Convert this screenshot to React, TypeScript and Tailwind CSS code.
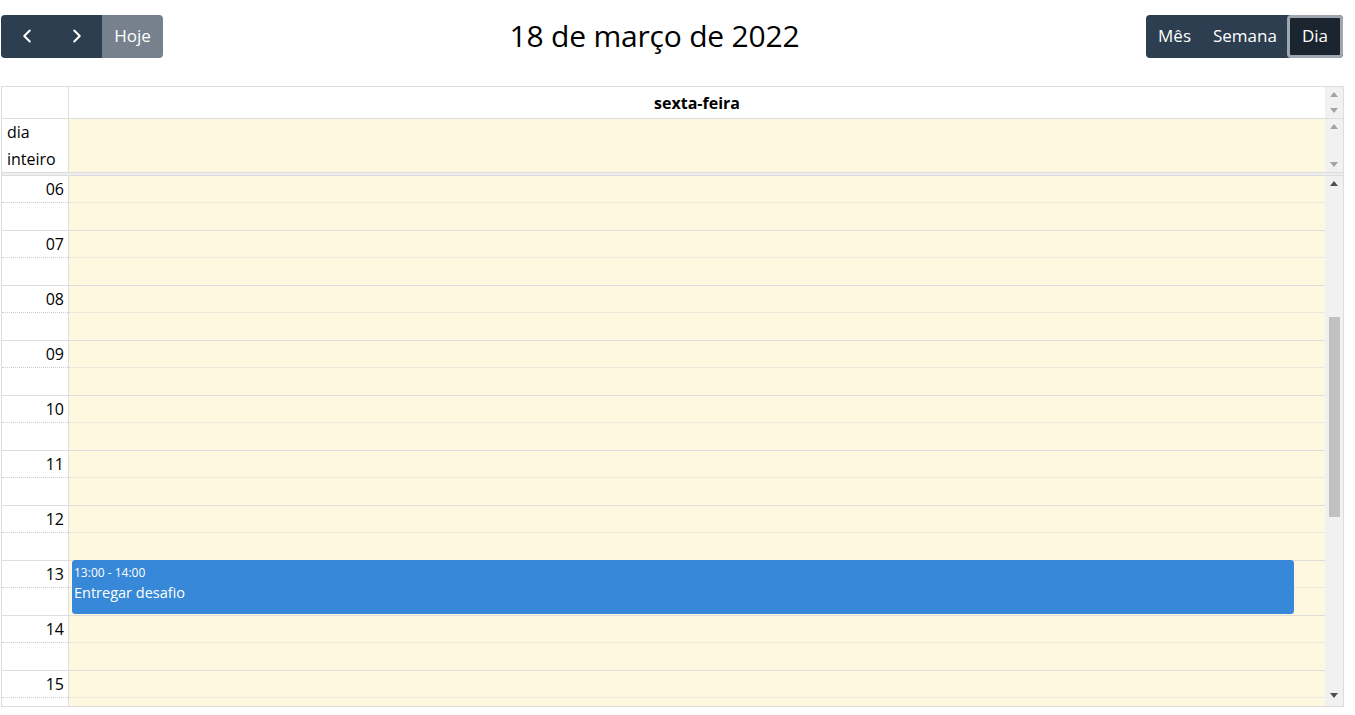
import { ChevronLeft, ChevronRight } from "lucide-react";

const hours = ["06", "07", "08", "09", "10", "11", "12", "13", "14", "15"];

const Tri = ({ up, color }: { up?: boolean; color: string }) => (
  <svg width="8" height="5" viewBox="0 0 8 5" className="block">
    <path d={up ? "M0 5 L4 0 L8 5 Z" : "M0 0 L8 0 L4 5 Z"} fill={color} />
  </svg>
);

export default function App() {
  return (
    <div className="w-[1355px] h-[715px] bg-white text-black overflow-hidden" style={{ fontFamily: '"Open Sans", "Noto Sans", sans-serif' }}>
      {/* toolbar */}
      <div className="flex items-center justify-between pl-[1px] pr-[12px] pt-[14px] h-[58px]">
        <div className="flex h-[43px] rounded-[4px] overflow-hidden text-white text-[17px]">
          <button className="w-[51px] flex items-center justify-center bg-[#2c3e50]">
            <ChevronLeft size={22} strokeWidth={2.2} />
          </button>
          <button className="w-[50px] flex items-center justify-center bg-[#2c3e50]">
            <ChevronRight size={22} strokeWidth={2.2} />
          </button>
          <button className="w-[61px] flex items-center justify-center bg-[#76818d]">Hoje</button>
        </div>
        <h2 className="text-[30px] leading-none tracking-[-0.2px]">18 de março de 2022</h2>
        <div className="flex h-[43px] rounded-[4px] overflow-hidden text-white text-[17px] bg-[#2c3e50]">
          <button className="px-[12px] flex items-center">Mês</button>
          <button className="px-[10px] flex items-center">Semana</button>
          <button className="px-[12px] flex items-center bg-[#1a252f] rounded-[4px] border-[3px] border-[#a0a7ae]">Dia</button>
        </div>
      </div>

      {/* calendar */}
      <div className="mt-[28px] ml-[1px] w-[1343px] border border-[#ddd] flex flex-col">
        {/* header */}
        <div className="flex h-[32px] border-b border-[#ddd]">
          <div className="w-[67px] border-r border-[#ddd]" />
          <div className="flex-1 flex items-center justify-center font-bold text-[16px]">sexta-feira</div>
          <div className="w-[18px] bg-[#f1f1f1] flex flex-col items-center justify-between py-[5px]">
            <Tri up color="#a3a3a3" />
            <Tri color="#a3a3a3" />
          </div>
        </div>
        {/* all day */}
        <div className="flex h-[53px]">
          <div className="w-[67px] border-r border-[#ddd] text-[16px] leading-[27px] pl-[5px]">dia<br />inteiro</div>
          <div className="flex-1 bg-[#fff8e0]" />
          <div className="w-[18px] bg-[#f1f1f1] flex flex-col items-center justify-between py-[5px]">
            <Tri up color="#a3a3a3" />
            <Tri color="#a3a3a3" />
          </div>
        </div>
        {/* divider */}
        <div className="h-[4px] border-y border-[#ddd] bg-[#eee]" />
        {/* time grid */}
        <div className="flex h-[530px] overflow-hidden">
          <div className="flex-1 flex relative">
            <div className="w-[67px] border-r border-[#ddd]">
              {hours.map((h) => (
                <div key={h} className="h-[55px] flex flex-col">
                  <div className="h-[27px] border-b border-dotted border-[#ccc] text-right pr-[4px] text-[16px] leading-[26px]">{h}</div>
                  <div className="h-[28px] border-b border-[#ddd]" />
                </div>
              ))}
            </div>
            <div className="flex-1 bg-[#fff8e0] relative">
              {hours.map((h) => (
                <div key={h} className="h-[55px] flex flex-col">
                  <div className="h-[27px] border-b border-dotted border-[#ddd]" />
                  <div className="h-[28px] border-b border-[#ddd]" />
                </div>
              ))}
              <div className="absolute left-[3px] right-[31px] top-[384px] h-[54px] bg-[#3788d8] rounded-[3px] text-white px-[1px] pt-[4px] border border-[#3788d8]">
                <div className="text-[12px] leading-[16px]">13:00 - 14:00</div>
                <div className="text-[14.5px] leading-[20px] mt-[2px]">Entregar desafio</div>
              </div>
            </div>
          </div>
          <div className="w-[18px] bg-[#f1f1f1] flex flex-col items-center pt-[5px] pb-[8px]">
            <Tri up color="#505050" />
            <div className="h-[131px]" />
            <div className="w-[11px] h-[200px] bg-[#c1c1c1]" />
            <div className="flex-1" />
            <Tri color="#505050" />
          </div>
        </div>
      </div>
    </div>
  );
}
